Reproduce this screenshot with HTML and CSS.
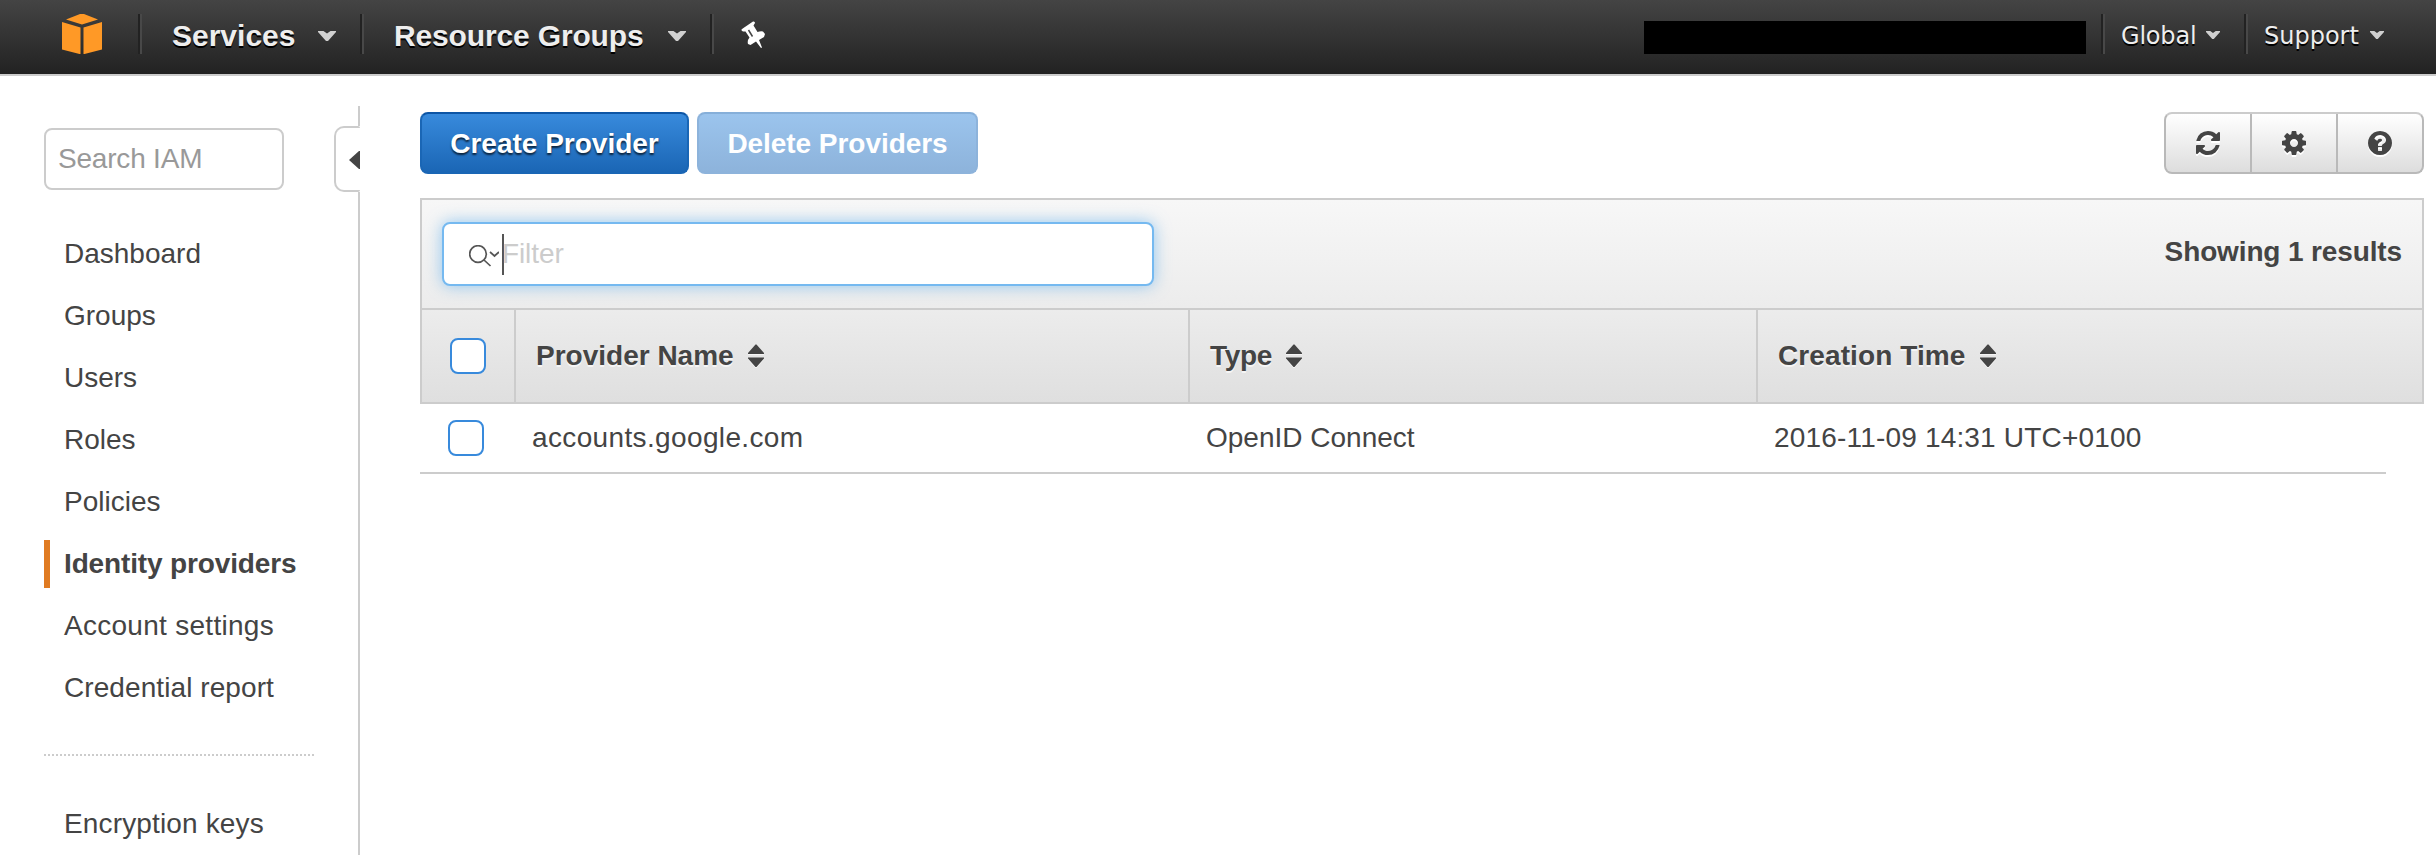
FILE: index.html
```html
<!DOCTYPE html>
<html lang="en">
<head>
<meta charset="utf-8">
<title>IAM - Identity providers</title>
<link rel="stylesheet" href="styles.css">
</head>
<body>
<svg class="defs" aria-hidden="true">
  <symbol id="chevron" viewBox="0 0 18 10"><path d="M0 0h5.500L9 2.500 12.500 0H18v1L10 10H8L0 1z"/></symbol>
  <symbol id="sort" viewBox="0 0 16 24"><path d="M0 9 7.500.5h1L16 9v1H0zM0 13.500h16v1L8.500 23h-1L0 14.500z"/></symbol>
</svg>
<header class="topbar">
  <svg class="logo" viewBox="0 0 40 40"><path d="M4 5.500 18 0h4l14 5.500L20 10.500zM0 8l18.500 5.500V40h-1L0 35.500zM40 8l-18.500 5.500V40h1L40 35.500z"/></svg>
  <nav class="menus">
    <a class="menu services">Services<svg class="chevron"><use href="#chevron"/></svg></a>
    <a class="menu resources">Resource Groups<svg class="chevron"><use href="#chevron"/></svg></a>
    <a class="pin"><svg viewBox="0 0 24 28"><path class="pin-shape" d="M1 8 12 .5q2-.5 2 1.500l-1.500 2.500 4 6.500q3-1 5.500-.5l2 2.500-1 3-5 3 3 7.500-1 .500-5-6.500-5.500 3.500-2.500-1q-1-3.500 1.500-6.500l-4-6H2Q-.5 9.500 1 8z"/><path class="pin-slit" d="m7.500 9 4 6.500"/></svg></a>
  </nav>
  <div class="account"></div>
  <nav class="submenus">
    <a class="submenu global">Global<svg class="chevron"><use href="#chevron"/></svg></a>
    <a class="submenu support">Support<svg class="chevron"><use href="#chevron"/></svg></a>
  </nav>
</header>
<div class="page">
  <aside class="sidebar">
    <div class="side-content">
      <input class="search" placeholder="Search IAM">
      <nav class="links">
        <a>Dashboard</a>
        <a>Groups</a>
        <a>Users</a>
        <a>Roles</a>
        <a>Policies</a>
        <a class="active">Identity providers</a>
        <a class="settings">Account settings</a>
        <a class="report">Credential report</a>
      </nav>
      <nav class="links extra"><a>Encryption keys</a></nav>
    </div>
    <div class="rail">
      <div class="rail-top"></div>
      <div class="rail-tab"><svg viewBox="0 0 11 18"><path d="M11 0v18h-1L0 9l10-9z"/></svg></div>
      <div class="rail-line"></div>
    </div>
  </aside>
  <main class="main">
    <div class="actions">
      <button class="btn create">Create Provider</button>
      <button class="btn delete">Delete Providers</button>
      <div class="tools">
        <button><svg viewBox="0 0 1536 1536"><path d="M1511 928q0 5-1 7-64 268-268 434.500T764 1536q-146 0-282.500-55T238 1324l-129 129q-19 19-45 19t-45-19-19-45V960q0-26 19-45t45-19h448q26 0 45 19t19 45-19 45l-137 137q71 66 161 102t187 36q134 0 250-65t186-179q11-17 53-117 8-23 30-23h192q13 0 22.500 9.500t9.500 22.500zm25-800v448q0 26-19 45t-45 19h-448q-26 0-45-19t-19-45 19-45l138-138Q969 256 768 256q-134 0-250 65T332 500q-11 17-53 117-8 23-30 23H50q-13 0-22.500-9.500T18 608v-7q65-268 270-434.500T768 0q146 0 284 55.500T1297 212l130-129q19-19 45-19t45 19 19 45z"/></svg></button>
        <button><svg viewBox="0 0 1536 1536"><path d="M1024 768q0-106-75-181t-181-75-181 75-75 181 75 181 181 75 181-75 75-181zm512-109v222q0 12-8 23t-20 13l-185 28q-19 54-39 91 35 50 107 138 10 12 10 25t-9 23q-27 37-99 108t-94 71q-12 0-26-9l-138-108q-44 23-91 38-16 136-29 186-7 28-36 28H657q-14 0-24.500-8.500T621 1506l-28-184q-49-16-90-37l-141 107q-10 9-25 9-14 0-25-11-126-114-165-168-7-10-7-23 0-12 8-23 15-21 51-66.500t54-70.500q-27-50-41-99L29 913q-13-2-21-12.500T0 877V655q0-12 8-23t19-13l186-28q14-46 39-92-40-57-107-138-10-12-10-24 0-10 9-23 26-36 98.500-107.500T337 135q13 0 26 10l138 107q44-23 91-38 16-136 29-186 7-28 36-28h222q14 0 24.500 8.500T915 30l28 184q49 16 90 37l142-107q9-9 24-9 13 0 25 10 129 119 165 170 7 8 7 22 0 12-8 23-15 21-51 66.500t-54 70.500q26 50 41 98l183 28q13 2 21 12.500t8 23.500z"/></svg></button>
        <button><svg viewBox="0 0 1536 1536"><path d="M896 1248v-192q0-14-9-23t-23-9H672q-14 0-23 9t-9 23v192q0 14 9 23t23 9h192q14 0 23-9t9-23zm256-672q0-88-55.500-163T958 297t-170-41q-243 0-371 213-15 24 8 42l132 100q7 6 19 6 16 0 25-12 53-68 86-92 34-24 86-24 48 0 85.500 26t37.500 59q0 38-20 61t-68 45q-63 28-115.500 86.500T640 892v36q0 14 9 23t23 9h192q14 0 23-9t9-23q0-19 21.500-49.500T972 829q32-18 49-28.500t46-35 44.500-48 28-60.500 12.500-81zm384 192q0 209-103 385.500T1153.500 1433 768 1536t-385.500-103T103 1153.500 0 768t103-385.500T382.500 103 768 0t385.500 103T1433 382.500 1536 768z"/></svg></button>
      </div>
    </div>
    <section class="grid-panel">
      <div class="filter-bar">
        <div class="filter">
          <svg class="magnifier" viewBox="0 0 30 22"><circle cx="9" cy="9" r="8.300"/><path d="m15 15 6.500 6M21 7l4.500 4L30 7"/></svg>
          <span class="cursor"></span><span class="placeholder">Filter</span>
        </div>
        <span class="count">Showing 1 results</span>
      </div>
      <div class="columns head">
        <div class="check-cell"><span class="check"></span></div>
        <div class="cell h-name"><span>Provider Name</span><svg class="sort"><use href="#sort"/></svg></div>
        <div class="cell h-type"><span>Type</span><svg class="sort"><use href="#sort"/></svg></div>
        <div class="cell h-time"><span>Creation Time</span><svg class="sort"><use href="#sort"/></svg></div>
      </div>
    </section>
    <div class="columns row">
      <div class="check-cell"><span class="check"></span></div>
      <div class="cell r-name">accounts.google.com</div>
      <div class="cell">OpenID Connect</div>
      <div class="cell r-time">2016-11-09 14:31 UTC+0100</div>
    </div>
  </main>
</div>
</body>
</html>
```
FILE: styles.css
```css
* { box-sizing: border-box; }
body {
  margin: 0;
  height: 855px;
  overflow: hidden;
  background: #fff;
  color: #444;
  font: 28px/48px "Liberation Sans", Arial, sans-serif;
}
.defs { position: absolute; width: 0; height: 0; }

/* Top bar */
.topbar {
  display: flex;
  height: 76px;
  padding: 14px 32px 0 62px;
  border-bottom: 2px solid #ccc;
  background: linear-gradient(#444, #222);
  color: #eee;
}
.logo { width: 40px; height: 40px; margin-right: 36px; fill: #ff9926; }
.menus, .submenus { display: flex; height: 40px; }
.menu, .submenu, .pin {
  display: flex;
  align-items: center;
  border-left: 2px solid #222;
  box-shadow: inset 2px 0 #484848;
  text-shadow: 0 2px 0 #000;
  line-height: 40px;
  white-space: nowrap;
}
.menu { padding: 3px 0 0 32px; font-size: 30px; font-weight: bold; }
.services { width: 222px; }
.resources { width: 350px; letter-spacing: -.15px; }
.chevron { width: 18px; height: 10px; margin-left: auto; fill: #d0d0d0; }
.menu .chevron { margin-right: 24px; }
.pin { padding: 0 0 2px 29px; width: 84px; }
.pin svg { width: 24px; height: 28px; margin-top: 3px; }
.pin-shape { fill: #fff; }
.pin-slit { fill: none; stroke: #444; stroke-width: 1.5; }
.account { width: 442px; height: 33px; margin: 7px 15px 0 auto; background: #000; }
.submenu {
  padding: 3px 0 0 18px;
  font: 24px/40px "DejaVu Sans", Verdana, sans-serif;
}
.global { width: 143px; letter-spacing: -.2px; }
.support { width: 160px; }
.submenu .chevron { width: 14px; height: 8px; margin: 0 24px 1px auto; }
.support .chevron { margin-right: 20px; }

/* Sidebar */
.page { display: flex; height: 779px; }
.sidebar { display: flex; width: 360px; padding-top: 30px; }
.side-content { width: 290px; flex: 1; padding: 22px 20px 0 44px; }
.search {
  display: block;
  width: 240px;
  height: 62px;
  padding: 0 12px;
  border: 2px solid #ccc;
  border-radius: 8px;
  font: inherit;
  letter-spacing: -.2px;
}
.search::placeholder { color: #999; }
.links { display: flex; flex-direction: column; gap: 14px; margin-top: 40px; }
.links a { padding-left: 20px; white-space: nowrap; }
.links .active {
  padding-left: 14px;
  border-left: 6px solid #e07b22;
  font-weight: bold;
  letter-spacing: -.14px;
}
.settings { letter-spacing: .28px; }
.report { letter-spacing: .08px; }
.extra {
  width: 270px;
  margin-top: 42px;
  padding-top: 44px;
  border-top: 2px dotted #ccc;
  letter-spacing: .15px;
}
.rail { display: flex; flex-direction: column; width: 26px; }
.rail-top, .rail-line { margin-left: 24px; background: #ccc; }
.rail-top { height: 20px; }
.rail-line { flex: 1; }
.rail-tab {
  display: flex;
  align-items: center;
  justify-content: flex-end;
  height: 66px;
  padding-top: 2px;
  border: 2px solid #ccc;
  border-right: 0;
  border-radius: 10px 2px 2px 10px;
}
.rail-tab svg { width: 11px; height: 18px; fill: #444; }

/* Main area */
.main { flex: 1; padding: 36px 12px 0 60px; }
.actions { display: flex; gap: 8px; height: 62px; margin-bottom: 24px; }
.btn {
  padding: 2px 0 0;
  border: 2px solid #1a66b5;
  border-top-color: #0d55a5;
  border-radius: 8px;
  background: linear-gradient(#388adc, #1b66b5);
  color: #fff;
  font: bold 28px/56px "Liberation Sans", Arial, sans-serif;
  text-shadow: 0 2px 2px rgba(0, 0, 0, .7);
}
.create { width: 269px; }
.delete {
  width: 281px;
  border-color: #8db3db;
  border-top-color: #86afd9;
  background: linear-gradient(#9bc4ed, #8db3db);
  text-shadow: none;
  letter-spacing: -.05px;
}
.tools {
  display: flex;
  width: 260px;
  margin-left: auto;
  border: 2px solid #b9b9b9;
  border-top-color: #ccc;
  border-radius: 8px;
  background: linear-gradient(#fff, #ddd);
}
.tools button {
  display: grid;
  place-items: center;
  flex: 1;
  padding: 0;
  border: 0;
  background: none;
}
.tools button + button { border-left: 2px solid #b9b9b9; }
.tools svg { width: 24px; height: 24px; fill: #444; filter: drop-shadow(0 2px 0 #fff); }

.grid-panel { border: 2px solid #ccc; }
.filter-bar {
  display: flex;
  justify-content: space-between;
  height: 110px;
  padding: 22px 20px 0;
  border-bottom: 2px solid #ccc;
  background: linear-gradient(#f7f7f7, #ececec);
}
.filter {
  display: flex;
  align-items: center;
  width: 712px;
  height: 64px;
  padding-left: 25px;
  border: 2px solid #75b9f0;
  border-radius: 8px;
  background: #fff;
  box-shadow: 0 0 16px rgba(82, 168, 236, .6);
}
.magnifier { width: 30px; height: 22px; margin-top: 3px; fill: none; stroke: #555; stroke-width: 1.7; }
.cursor { width: 2px; height: 41px; margin-left: 3px; background: #555; }
.placeholder { color: #ccc; margin-left: -2px; letter-spacing: -.1px; }
.count { margin-top: 6px; font-weight: bold; letter-spacing: -.13px; }

.columns { display: grid; grid-template-columns: 92px 674px 568px 1fr; }
.cell { display: flex; align-items: center; white-space: nowrap; }
.check-cell { padding: 28px 0 0 28px; }
.check {
  display: block;
  width: 36px;
  height: 36px;
  border: 2px solid #388adc;
  border-radius: 8px;
  background: #fff;
}
.head {
  height: 92px;
  background: linear-gradient(#ececec, #dfdfdf);
  font-weight: bold;
  text-shadow: 0 2px 0 #f5f5f5;
}
.head .cell { padding-left: 20px; border-left: 2px solid #ccc; }
.h-type { letter-spacing: -.3px; }
.h-time { letter-spacing: .1px; }
.sort { width: 16px; height: 24px; margin-left: 14px; fill: #444; filter: drop-shadow(0 1px 0 #f5f5f5); }
.row {
  width: 1966px;
  height: 70px;
  grid-template-columns: 112px 674px 568px 1fr;
  border-bottom: 2px solid #ccc;
}
.row .check-cell { padding-top: 16px; }
.r-name { letter-spacing: .36px; }
.r-time { letter-spacing: .18px; }
```
